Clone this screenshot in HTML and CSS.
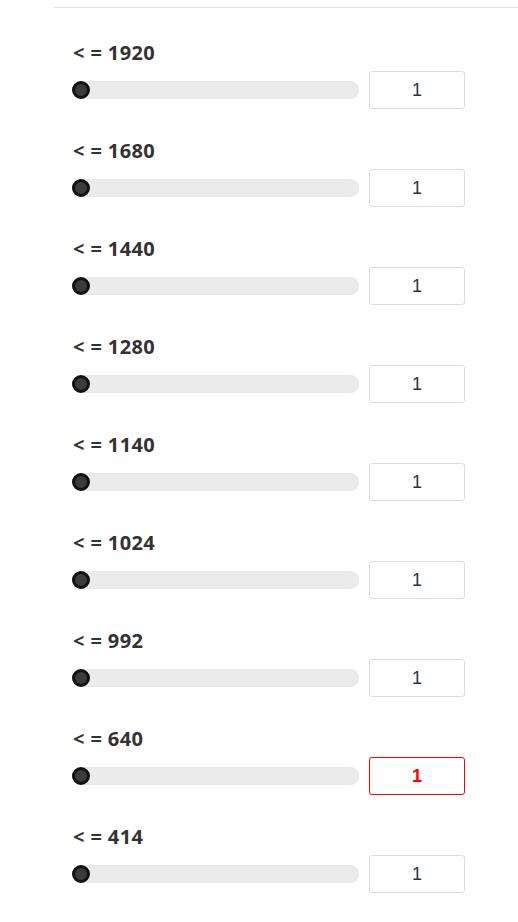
FILE: index.html
```html
<!DOCTYPE html>
<html>
<head>
<meta charset="utf-8">
<link rel="stylesheet" href="styles.css">
</head>
<body>
<div class="panel">
  <div class="row">
    <div class="label">&lt; = 1920</div>
    <div class="controls"><div class="track"><span class="thumb"></span></div><div class="value">1</div></div>
  </div>
  <div class="row">
    <div class="label">&lt; = 1680</div>
    <div class="controls"><div class="track"><span class="thumb"></span></div><div class="value">1</div></div>
  </div>
  <div class="row">
    <div class="label">&lt; = 1440</div>
    <div class="controls"><div class="track"><span class="thumb"></span></div><div class="value">1</div></div>
  </div>
  <div class="row">
    <div class="label">&lt; = 1280</div>
    <div class="controls"><div class="track"><span class="thumb"></span></div><div class="value">1</div></div>
  </div>
  <div class="row">
    <div class="label">&lt; = 1140</div>
    <div class="controls"><div class="track"><span class="thumb"></span></div><div class="value">1</div></div>
  </div>
  <div class="row">
    <div class="label">&lt; = 1024</div>
    <div class="controls"><div class="track"><span class="thumb"></span></div><div class="value">1</div></div>
  </div>
  <div class="row">
    <div class="label">&lt; = 992</div>
    <div class="controls"><div class="track"><span class="thumb"></span></div><div class="value">1</div></div>
  </div>
  <div class="row">
    <div class="label">&lt; = 640</div>
    <div class="controls"><div class="track"><span class="thumb"></span></div><div class="value error">1</div></div>
  </div>
  <div class="row">
    <div class="label">&lt; = 414</div>
    <div class="controls"><div class="track"><span class="thumb"></span></div><div class="value">1</div></div>
  </div>
</div>
</body>
</html>
```

FILE: styles.css
```css
html, body {
  margin: 0;
  padding: 0;
  background: #ffffff;
}

.panel {
  margin: 7px 0 0 54px;
  border-top: 1px solid #e3e3e3;
  padding: 33px 0 0 18px;
  display: flex;
  flex-direction: column;
  gap: 30px;
}

.row {
  display: flex;
  flex-direction: column;
  gap: 6px;
}

.label {
  font-family: "Open Sans", sans-serif;
  font-weight: 700;
  font-size: 20px;
  line-height: 24px;
  letter-spacing: 0.4px;
  color: #333333;
  padding-left: 1px;
}

.controls {
  display: flex;
  align-items: center;
  gap: 10px;
}

.track {
  width: 287px;
  height: 18px;
  border-radius: 9px;
  background: #ebebeb;
  box-shadow: inset 0 0 1px rgba(0, 0, 0, 0.12);
  display: flex;
  align-items: center;
}

.thumb {
  width: 12px;
  height: 12px;
  border-radius: 50%;
  border: 3px solid #111111;
  background: #3b3b3b;
}

.value {
  width: 94px;
  height: 36px;
  border: 1px solid #dcdcdc;
  border-radius: 3px;
  display: flex;
  align-items: center;
  justify-content: center;
  font-family: "Liberation Sans", Arial, sans-serif;
  font-size: 18px;
  color: #2b3440;
}

.value.error {
  border-color: #ff0000;
  color: #ff0000;
  font-weight: 700;
}
```
